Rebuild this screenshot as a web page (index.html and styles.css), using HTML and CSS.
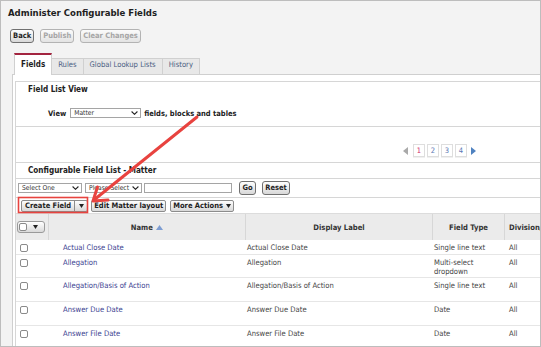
FILE: index.html
```html
<!DOCTYPE html>
<html lang="en">
<head>
<meta charset="utf-8">
<title>Administer Configurable Fields</title>
<link rel="stylesheet" href="styles.css">
</head>
<body>
<div class="frame">
  <h1 class="page-title">Administer Configurable Fields</h1>
  <div class="toolbar">
    <button class="btn">Back</button>
    <button class="btn disabled">Publish</button>
    <button class="btn disabled">Clear Changes</button>
  </div>
  <div class="tabs">
    <div class="tab active">Fields</div>
    <div class="tab">Rules</div>
    <div class="tab">Global Lookup Lists</div>
    <div class="tab">History</div>
  </div>
  <div class="panel">
    <div class="content">
      <section class="flv">
        <div class="sec-title">Field List View</div>
        <div class="view-row">
          <span class="lbl">View</span>
          <span class="select sel-matter">Matter<svg class="chev" width="7" height="4" viewBox="0 0 7 4"><path d="M0.6 0.5 L3.5 3.3 L6.4 0.5" fill="none" stroke="#222" stroke-width="1.1"/></svg></span>
          <span class="lbl">fields, blocks and tables</span>
        </div>
      </section>
      <section class="pager">
        <svg class="pg-arrow prev" width="5" height="8" viewBox="0 0 5 8"><path d="M5 0 L0 4 L5 8 Z" fill="#a9a9a9"/></svg>
        <span class="pg current">1</span>
        <span class="pg">2</span>
        <span class="pg">3</span>
        <span class="pg">4</span>
        <svg class="pg-arrow next" width="5" height="8" viewBox="0 0 5 8"><path d="M0 0 L5 4 L0 8 Z" fill="#4f82c0"/></svg>
      </section>
      <section class="list-title">Configurable Field List - Matter</section>
      <section class="filters">
        <span class="select sel-one">Select One<svg class="chev" width="7" height="4" viewBox="0 0 7 4"><path d="M0.6 0.5 L3.5 3.3 L6.4 0.5" fill="none" stroke="#222" stroke-width="1.1"/></svg></span>
        <span class="select sel-please">Please Select<svg class="chev" width="7" height="4" viewBox="0 0 7 4"><path d="M0.6 0.5 L3.5 3.3 L6.4 0.5" fill="none" stroke="#222" stroke-width="1.1"/></svg></span>
        <span class="text-input"></span>
        <button class="btn go">Go</button>
        <button class="btn reset">Reset</button>
      </section>
      <section class="actions">
        <span class="btn split"><span class="split-main">Create Field</span><span class="split-drop"><svg width="5" height="4" viewBox="0 0 5 4"><path d="M0 0 H5 L2.5 4 Z" fill="#222"/></svg></span></span>
        <button class="btn act">Edit Matter layout</button>
        <button class="btn act">More Actions <svg width="5" height="4" viewBox="0 0 5 4"><path d="M0 0 H5 L2.5 4 Z" fill="#222"/></svg></button>
      </section>
      <table class="grid">
        <colgroup>
          <col class="c-check"><col class="c-name"><col class="c-label"><col class="c-type"><col class="c-div">
        </colgroup>
        <thead>
          <tr>
            <th class="th-check"><span class="hcb"><span class="cb"></span><svg width="5" height="4" viewBox="0 0 5 4"><path d="M0 0 H5 L2.5 4 Z" fill="#222"/></svg></span></th>
            <th>Name <svg class="sort" width="7" height="5" viewBox="0 0 7 5"><path d="M0 5 L3.5 0 L7 5 Z" fill="#7d9dd2"/></svg></th>
            <th>Display Label</th>
            <th>Field Type</th>
            <th class="th-div">Division/Practice Area</th>
          </tr>
        </thead>
        <tbody>
          <tr class="r-short">
            <td class="td-check"><span class="cb"></span></td>
            <td class="td-name"><a>Actual Close Date</a></td>
            <td class="td-label">Actual Close Date</td>
            <td class="td-type">Single line text</td>
            <td class="td-div">All</td>
          </tr>
          <tr class="r-mid">
            <td class="td-check"><span class="cb"></span></td>
            <td class="td-name"><a>Allegation</a></td>
            <td class="td-label">Allegation</td>
            <td class="td-type">Multi-select dropdown</td>
            <td class="td-div">All</td>
          </tr>
          <tr class="r-tall">
            <td class="td-check"><span class="cb"></span></td>
            <td class="td-name"><a>Allegation/Basis of Action</a></td>
            <td class="td-label">Allegation/Basis of Action</td>
            <td class="td-type">Single line text</td>
            <td class="td-div">All</td>
          </tr>
          <tr class="r-tall">
            <td class="td-check"><span class="cb"></span></td>
            <td class="td-name"><a>Answer Due Date</a></td>
            <td class="td-label">Answer Due Date</td>
            <td class="td-type">Date</td>
            <td class="td-div">All</td>
          </tr>
          <tr class="r-tall">
            <td class="td-check"><span class="cb"></span></td>
            <td class="td-name"><a>Answer File Date</a></td>
            <td class="td-label">Answer File Date</td>
            <td class="td-type">Date</td>
            <td class="td-div">All</td>
          </tr>
        </tbody>
      </table>
    </div>
  </div>
  <svg class="annot" width="541" height="347" viewBox="0 0 541 347">
    <rect x="18.5" y="197.5" width="69" height="15" fill="none" stroke="#e8433f" stroke-width="1.6"/>
    <path d="M197 117 L94.5 199.5" fill="none" stroke="#e8433f" stroke-width="3" stroke-linecap="round"/>
    <path d="M97.5 187 L93 201 L108 200" fill="none" stroke="#e8433f" stroke-width="3" stroke-linecap="round" stroke-linejoin="round"/>
  </svg>
</div>
</body>
</html>
```

FILE: styles.css
```css
* {
  box-sizing: border-box;
}

html,
body {
  margin: 0;
  padding: 0;
}

body {
  font-family: "DejaVu Sans", sans-serif;
  font-stretch: condensed;
  font-size: 7.6px;
  color: #444;
  background: #ffffff;
}

.frame {
  position: relative;
  width: 541px;
  height: 347px;
  border: 1px solid #bdbdbd;
  background: #f3f3f3;
  overflow: hidden;
}

.page-title {
  margin: 0;
  padding: 6px 0 0 7px;
  font-size: 9.5px;
  line-height: 12px;
  font-weight: bold;
  color: #1e1e1e;
}

/* buttons */
.btn {
  display: inline-flex;
  align-items: center;
  justify-content: center;
  margin: 0;
  height: 14px;
  padding: 0 2px;
  border: 1px solid #707070;
  border-radius: 3px;
  background: linear-gradient(#fefefe, #d8d8d8);
  font-family: "DejaVu Sans", sans-serif;
  font-stretch: condensed;
  font-size: 7.5px;
  font-weight: bold;
  line-height: 10px;
  color: #1e1e1e;
  white-space: nowrap;
}

.btn.disabled {
  border-color: #b3b3b3;
  color: #a6a6a6;
  background: linear-gradient(#fbfbfb, #e3e3e3);
}

.toolbar {
  display: flex;
  gap: 6px;
  margin-top: 10px;
  padding-left: 9px;
}

/* tabs */
.tabs {
  position: relative;
  z-index: 1;
  display: flex;
  align-items: flex-end;
  height: 22px;
  margin: 10px 0 -1px 13px;
}

.tab {
  height: 17px;
  padding: 0 6px;
  line-height: 11px;
  border-top: 1px solid #d0d0d0;
  border-right: 1px solid #d0d0d0;
  border-bottom: 1px solid #d0d0d0;
  background: #e8e8e8;
  color: #4b5e82;
  white-space: nowrap;
}

.tab.active {
  height: 22px;
  padding: 4px 6px 0;
  line-height: 12px;
  border-top: 2px solid #a3243f;
  border-left: 1px solid #d0d0d0;
  border-bottom: 0;
  background: #ffffff;
  color: #1e1e1e;
  font-weight: bold;
  font-size: 8px;
}

/* panel */
.panel {
  height: 300px;
  margin-left: 11px;
  padding: 6px 0 0 2px;
  border-top: 1px solid #cfcfcf;
  border-left: 1px solid #cfcfcf;
  background: #ffffff;
}

.content {
  border-top: 1px solid #d6d6d6;
  border-left: 1px solid #d6d6d6;
}

.flv {
  height: 45px;
  border-bottom: 1px solid #d6d6d6;
}

.sec-title {
  padding: 1px 0 0 12px;
  font-size: 8.1px;
  line-height: 12px;
  font-weight: bold;
  color: #222;
}

.view-row {
  display: flex;
  align-items: center;
  gap: 3px;
  height: 12px;
  margin-top: 12px;
  padding-left: 32px;
}

.lbl {
  font-size: 7.5px;
  font-weight: bold;
  color: #222;
}

.select {
  display: inline-flex;
  align-items: center;
  justify-content: space-between;
  height: 10px;
  padding: 0 2px 0 3px;
  border: 1px solid #a5a5a5;
  background: #ffffff;
  font-size: 6.7px;
  line-height: 8px;
  color: #333;
  white-space: nowrap;
}

.sel-matter {
  width: 71px;
  margin-left: 1px;
}

.sel-one {
  width: 64px;
  margin-right: 3px;
}

.sel-please {
  width: 57px;
  margin-right: 2px;
}

.chev {
  flex: none;
}

/* pager */
.pager {
  display: flex;
  align-items: flex-start;
  gap: 2px;
  height: 36px;
  padding: 17px 0 0 387px;
  border-bottom: 1px solid #d6d6d6;
}

.pg-arrow {
  margin-top: 2.5px;
}

.pg-arrow.prev {
  margin-right: 3px;
}

.pg-arrow.next {
  margin-left: 2px;
}

.pg {
  display: flex;
  align-items: center;
  justify-content: center;
  width: 12px;
  height: 13px;
  border: 1px solid #dedede;
  box-shadow: 0 1px 0 #f0f0f0;
  font-size: 7.5px;
  color: #5a78b4;
}

.pg.current {
  color: #cf2b6b;
}

/* list */
.list-title {
  height: 16px;
  padding-left: 12px;
  border-bottom: 1px solid #d6d6d6;
  font-size: 8.1px;
  line-height: 14px;
  font-weight: bold;
  color: #222;
}

.filters {
  display: flex;
  align-items: center;
  height: 19px;
  padding-left: 2px;
  border-bottom: 1px solid #d6d6d6;
}

.text-input {
  width: 88px;
  height: 10px;
  margin-right: 7px;
  border: 1px solid #a5a5a5;
  background: #ffffff;
}

.btn.go {
  width: 17px;
  margin-right: 6px;
}

.btn.reset {
  width: 28px;
}

.actions {
  display: flex;
  align-items: center;
  gap: 3px;
  height: 15px;
  padding-left: 5px;
}

.btn.split,
.btn.act {
  height: 12px;
  border-color: #8c8c8c;
  border-radius: 2px;
}

.btn.split {
  padding: 0;
}

.split-main {
  padding: 0 3px 0 3px;
}

.split-drop {
  display: flex;
  align-items: center;
  justify-content: center;
  width: 13px;
  height: 100%;
  border-left: 1px solid #8c8c8c;
}

.btn.act {
  padding: 0 2px;
  gap: 3px;
}

.btn.act + .btn.act {
  margin-left: 1px;
}

/* table */
.grid {
  width: 609px;
  table-layout: fixed;
  border-collapse: separate;
  border-spacing: 0;
  border-top: 1px solid #dcdcdc;
}

.c-check { width: 33px; }
.c-name { width: 197px; }
.c-label { width: 187px; }
.c-type { width: 72px; }
.c-div { width: 120px; }

.grid th {
  height: 26px;
  padding: 0;
  background: #ebebeb;
  border-right: 1px solid #d7d7d7;
  font-size: 7.6px;
  font-weight: bold;
  color: #333;
  text-align: center;
  white-space: nowrap;
}

.grid th.th-check {
  text-align: left;
  padding-left: 1px;
}

.grid th.th-div {
  text-align: left;
  padding-left: 4px;
}

.sort {
  margin-left: 1px;
  vertical-align: 0;
}

.hcb {
  display: inline-flex;
  align-items: center;
  justify-content: space-between;
  width: 28px;
  height: 12px;
  padding: 0 6px 0 1px;
  border: 1px solid #9a9a9a;
  border-radius: 3px;
  background: linear-gradient(#ffffff, #d9d9d9);
  vertical-align: middle;
}

.cb {
  display: inline-block;
  width: 8px;
  height: 8px;
  border: 1px solid #8a8a8a;
  border-radius: 2px;
  background: #ffffff;
}

.grid td {
  padding: 2.5px 0 0;
  vertical-align: top;
  border-bottom: 1px solid #e6e6e6;
  line-height: 9.5px;
  color: #444;
}

.grid td.td-check {
  padding-left: 4px;
}

.td-check .cb {
  display: block;
  margin-top: 1.5px;
}

.td-name {
  padding-left: 14px !important;
}

.td-name a {
  color: #3a4190;
  text-decoration: none;
}

.td-label {
  padding-left: 1px !important;
}

.td-type {
  padding-left: 1px !important;
  padding-right: 14px !important;
}

.td-div {
  padding-left: 4px !important;
}

.r-short { height: 15px; }
.r-mid { height: 23px; }
.r-tall { height: 24px; }

/* annotation overlay */
.annot {
  position: absolute;
  left: -1px;
  top: -1px;
  pointer-events: none;
}
```
